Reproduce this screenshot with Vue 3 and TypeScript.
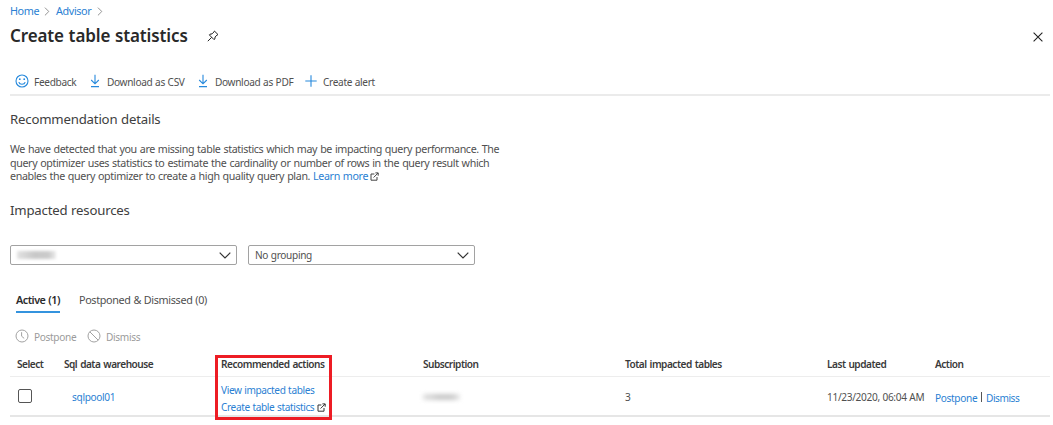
<script setup lang="ts">
interface Command {
  icon: 'smile' | 'download' | 'plus'
  label: string
  cls: string
}

const commands: Command[] = [
  { icon: 'smile', label: 'Feedback', cls: 'feedback' },
  { icon: 'download', label: 'Download as CSV', cls: 'csv' },
  { icon: 'download', label: 'Download as PDF', cls: 'pdf' },
  { icon: 'plus', label: 'Create alert', cls: 'alert' },
]

const columns: string[] = [
  'Select',
  'Sql data warehouse',
  'Recommended actions',
  'Subscription',
  'Total impacted tables',
  'Last updated',
  'Action',
]
</script>

<template>
  <main class="blade">
    <nav class="crumbs">
      <a class="home">Home</a>
      <svg class="sep" viewBox="0 0 6 10"><path d="M.7 .7 5 5 .7 9.3" /></svg>
      <a class="advisor">Advisor</a>
      <svg class="sep" viewBox="0 0 6 10"><path d="M.7 .7 5 5 .7 9.3" /></svg>
    </nav>

    <header class="title-row">
      <h1>Create table statistics</h1>
      <svg class="pin" viewBox="0 0 12 12">
        <path d="M7.4 1 11 4.6 10.1 5 8.1 7 7.8 9 7.1 9.7 2.3 4.9 3 4.2 5 3.9 7 1.9ZM4.7 7.3.8 11.2" />
      </svg>
      <svg class="close" viewBox="0 0 10 10"><path d="M.6.6 9.4 9.4M9.4.6.6 9.4" /></svg>
    </header>

    <div class="toolbar">
      <div v-for="c in commands" :key="c.label" class="command" :class="c.cls">
        <svg v-if="c.icon === 'smile'" class="i-smile" viewBox="0 0 14 14">
          <circle cx="7" cy="7" r="6" />
          <path d="M3.8 8.2C4.6 11 9.4 11 10.2 8.2" />
          <circle class="dot" cx="4.8" cy="5.2" r=".9" />
          <circle class="dot" cx="9.2" cy="5.2" r=".9" />
        </svg>
        <svg v-else-if="c.icon === 'download'" class="i-down" viewBox="0 0 10 14">
          <path d="M5 .8V9.6M1.2 6 5 9.8 8.8 6M1 12.6H9" />
        </svg>
        <svg v-else class="i-plus" viewBox="0 0 12 12"><path d="M6 .3V11.7M.3 6H11.7" /></svg>
        <span>{{ c.label }}</span>
      </div>
    </div>

    <h2 class="h-details">Recommendation details</h2>
    <p class="description">
      We have detected that you are missing table statistics which may be impacting query performance. The<br />
      query optimizer uses statistics to estimate the cardinality or number of rows in the query result which<br />
      enables the query optimizer to create a high quality query plan. <a>Learn more</a>
      <svg class="ext" viewBox="0 0 9 9"><path d="M4.4 2H1V8.2H7V5M5.4.9H8.2V3.7M8.1 1 3.6 5.5" /></svg>
    </p>
    <h2 class="h-resources">Impacted resources</h2>

    <div class="filters">
      <div class="select">
        <i class="redacted" />
        <svg class="chev" viewBox="0 0 12 7"><path d="M.7.7 6 6 11.3.7" /></svg>
      </div>
      <div class="select">
        <span>No grouping</span>
        <svg class="chev" viewBox="0 0 12 7"><path d="M.7.7 6 6 11.3.7" /></svg>
      </div>
    </div>

    <div class="tabs">
      <div class="tab active">Active (1)</div>
      <div class="tab">Postponed &amp; Dismissed (0)</div>
    </div>

    <div class="bulk">
      <svg viewBox="0 0 14 14"><circle cx="7" cy="7" r="6" /><path d="M6.6 3.2V7.2L9.2 9.4" /></svg>
      <span class="b-post">Postpone</span>
      <svg viewBox="0 0 14 14"><circle cx="7" cy="7" r="6" /><path d="M2.8 2.8 11.2 11.2" /></svg>
      <span>Dismiss</span>
    </div>

    <section class="table">
      <div class="row head">
        <div v-for="name in columns" :key="name">{{ name }}</div>
      </div>
      <div class="row body">
        <div><i class="checkbox" /></div>
        <div class="pool"><a>sqlpool01</a></div>
        <div class="actions">
          <a>View impacted tables</a>
          <div class="create">
            <a>Create table statistics</a>
            <svg class="ext" viewBox="0 0 9 9"><path d="M4.4 2H1V8.2H7V5M5.4.9H8.2V3.7M8.1 1 3.6 5.5" /></svg>
          </div>
        </div>
        <div><i class="redacted small" /></div>
        <div>3</div>
        <div>11/23/2020, 06:04 AM</div>
        <div class="links"><a class="k1">Postpone</a><i class="bar" /><a class="k2">Dismiss</a></div>
      </div>
      <div class="highlight" />
    </section>
  </main>
</template>

<style>
body {
  background: #fff;
}
</style>

<style scoped>
.blade {
  width: 1053px;
  height: 425px;
  overflow: hidden;
  box-sizing: border-box;
  padding-left: 10px;
  background: #fff;
  color: #505050;
  font: 10.1px/14px "Noto Sans", "Open Sans", sans-serif;
  letter-spacing: -0.33px;
  word-spacing: 0.4px;
  white-space: nowrap;
}
svg {
  display: block;
  flex: none;
  fill: none;
  stroke: #444;
}
a {
  color: #2b7fd3;
}
h1,
h2,
p {
  margin: 0;
}
.crumbs {
  display: flex;
  align-items: center;
  height: 22px;
  font-size: 10.8px;
  letter-spacing: -0.38px;
}
.home {
  width: 34px;
}
.advisor {
  width: 42px;
  margin-left: 6px;
}
.sep {
  width: 6px;
  height: 9px;
  stroke: #888;
}
.advisor + .sep {
  margin-left: -1px;
}
.title-row {
  display: flex;
  align-items: center;
  height: 28px;
}
h1 {
  width: 197px;
  font-size: 17px;
  line-height: 24px;
  font-weight: 600;
  letter-spacing: -0.12px;
  color: #292929;
}
.pin {
  width: 12px;
  height: 12px;
  stroke: #222;
}
.close {
  width: 10px;
  height: 10px;
  margin: 1px 0 0 814px;
  stroke: #222;
  stroke-width: 1.1;
}
.toolbar {
  display: flex;
  align-items: center;
  height: 26px;
  margin: 18px 3px 0 0;
  padding-left: 5px;
  border-bottom: 2px solid #ebebeb;
}
.command {
  display: flex;
  align-items: center;
}
.command span {
  padding-top: 2px;
}
.command svg {
  stroke: #2689dc;
  stroke-width: 1.1;
}
.feedback {
  width: 75px;
}
.csv {
  width: 108px;
}
.pdf {
  width: 107px;
}
.i-smile {
  width: 14px;
  height: 14px;
  margin-right: 5px;
}
.command .dot {
  fill: #2689dc;
  stroke: none;
}
.i-down {
  width: 10px;
  height: 14px;
  margin-right: 7px;
}
.i-plus {
  width: 12px;
  height: 12px;
  margin-right: 6px;
}
h2 {
  font-size: 13.2px;
  line-height: 20px;
  font-weight: 400;
  letter-spacing: -0.19px;
  color: #404040;
}
.h-details {
  margin-top: 13px;
}
.description {
  position: relative;
  height: 40px;
  padding-top: 14px;
  font-size: 10.7px;
  line-height: 13.5px;
  letter-spacing: -0.37px;
  word-spacing: 0.55px;
}
.description .ext {
  position: absolute;
  left: 360px;
  top: 43px;
}
.ext {
  width: 9px;
  height: 9px;
}
.h-resources {
  margin-top: 17px;
}
.filters {
  display: flex;
  gap: 11px;
  margin-top: 25px;
}
.select {
  display: flex;
  align-items: center;
  justify-content: space-between;
  box-sizing: border-box;
  width: 227px;
  height: 20px;
  padding: 0 5px 0 6px;
  border: 1px solid #a2a2a2;
  border-radius: 2px;
}
.chev {
  width: 12px;
  height: 7px;
  stroke: #333;
  stroke-width: 1.2;
}
.redacted {
  display: block;
  width: 39px;
  height: 8px;
  background: linear-gradient(90deg, #e2e2e2, #c8c8c8 45%, #cacaca 80%, #ececec);
  filter: blur(1.5px);
}
.tabs {
  display: flex;
  height: 24px;
  margin: 25px 0 0 6px;
  font-size: 10.8px;
  line-height: 20px;
  letter-spacing: -0.35px;
}
.tab.active {
  width: 44px;
  height: 21px;
  margin-right: 19px;
  border-bottom: 2px solid #3493de;
  font-weight: 600;
  letter-spacing: -0.48px;
  color: #2b2b2b;
}
.bulk {
  display: flex;
  align-items: center;
  height: 14px;
  margin: 15px 0 0 5px;
  color: #9b9b9b;
}
.bulk svg {
  width: 14px;
  height: 14px;
  margin-right: 5px;
  stroke: #a2a2a2;
}
.bulk span {
  padding-top: 1px;
}
.b-post {
  width: 53px;
}
.table {
  position: relative;
  margin-right: 3px;
}
.row {
  display: grid;
  grid-template-columns: 54px 157px 202px 202px 202px 108px 1fr;
  align-items: center;
}
.head {
  height: 25px;
  margin-top: 8px;
  border-bottom: 1px solid #ededed;
  font-weight: 600;
  letter-spacing: -0.5px;
  word-spacing: 0.8px;
  color: #3a3a3a;
}
.head > :first-child {
  padding-left: 7px;
}
.body {
  box-sizing: border-box;
  height: 40px;
  padding-top: 1px;
  border-bottom: 2px solid #e6e6e6;
}
.checkbox {
  display: block;
  box-sizing: border-box;
  width: 14px;
  height: 14px;
  margin: 0 0 2px 8px;
  border: 1px solid #555;
  border-radius: 2px;
}
.pool {
  padding-left: 8px;
}
.actions {
  display: grid;
  row-gap: 3px;
  padding-top: 4px;
  letter-spacing: -0.38px;
}
.create {
  display: flex;
  align-items: center;
}
.create a {
  width: 96px;
}
.create .ext {
  stroke: #333;
}
.small {
  width: 37px;
  height: 6px;
  filter: blur(2px);
}
.links {
  display: flex;
  align-items: center;
  padding-top: 2px;
}
.k1 {
  width: 46px;
}
.k2 {
  letter-spacing: -0.45px;
}
.bar {
  width: 1px;
  height: 10px;
  margin: -2px 4px 0 0;
  background: #555;
}
.highlight {
  position: absolute;
  box-sizing: border-box;
  left: 205px;
  top: 4px;
  width: 117px;
  height: 65px;
  border: 3px solid #ed1c24;
}
</style>
